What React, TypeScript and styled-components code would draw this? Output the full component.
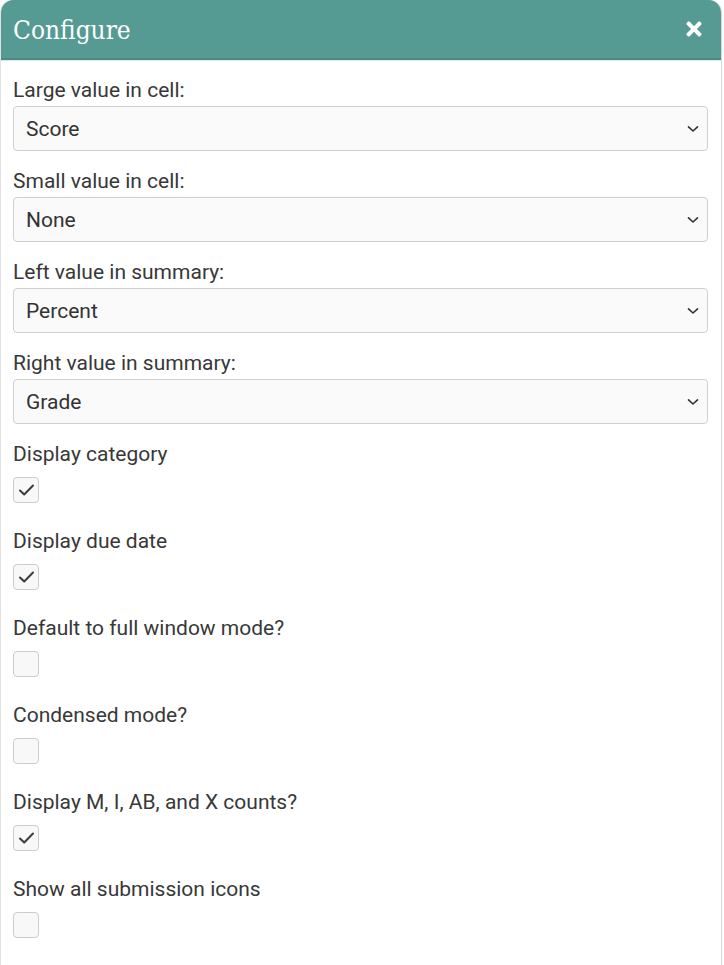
import { VFC } from 'react';
import styled, { createGlobalStyle } from 'styled-components';
import { FaTimes } from 'react-icons/fa';

const GlobalStyle = createGlobalStyle`
  html, body {
    margin: 0;
    padding: 0;
    background: #ffffff;
  }
  body {
    font-family: Roboto, 'Noto Sans', sans-serif;
    color: #333333;
  }
`;

const selects = [
  { label: 'Large value in cell:', value: 'Score' },
  { label: 'Small value in cell:', value: 'None' },
  { label: 'Left value in summary:', value: 'Percent' },
  { label: 'Right value in summary:', value: 'Grade' },
];

const toggles = [
  { label: 'Display category', checked: true },
  { label: 'Display due date', checked: true },
  { label: 'Default to full window mode?', checked: false },
  { label: 'Condensed mode?', checked: false },
  { label: 'Display M, I, AB, and X counts?', checked: true },
  { label: 'Show all submission icons', checked: false },
  { label: 'Enable keyboard navigation', checked: false },
];

const Chevron: VFC = () => (
  <svg width="12" height="8" viewBox="0 0 12 8" fill="none">
    <path
      d="M1.5 1.8 L6 6 L10.5 1.8"
      stroke="#333"
      strokeWidth="1.6"
      strokeLinecap="round"
      strokeLinejoin="round"
    />
  </svg>
);

const Check: VFC = () => (
  <svg width="17" height="14" viewBox="0 0 17 14" fill="none">
    <path
      d="M2 7.5 L6.2 11.5 L15 2.5"
      stroke="#3c3c3c"
      strokeWidth="2"
      strokeLinecap="round"
      strokeLinejoin="round"
    />
  </svg>
);

const App: VFC = () => (
  <>
    <GlobalStyle />
    <Panel>
      <Header>
        <Title>Configure</Title>
        <Close aria-label="Close">
          <FaTimes />
        </Close>
      </Header>
      <Body>
        {selects.map((s) => (
          <Field key={s.label}>
            <Label>{s.label}</Label>
            <SelectBox>
              <span>{s.value}</span>
              <Chevron />
            </SelectBox>
          </Field>
        ))}
        {toggles.map((t) => (
          <Field key={t.label} $check>
            <Label>{t.label}</Label>
            <Checkbox $checked={t.checked}>{t.checked && <Check />}</Checkbox>
          </Field>
        ))}
      </Body>
    </Panel>
  </>
);

export default App;

const Panel = styled.div`
  width: 722px;
  height: 965px;
  overflow: hidden;
  box-sizing: border-box;
  border-left: 1px solid #e2e2e2;
  border-right: 1px solid #d6d6d6;
  border-radius: 13px 13px 0 0;
  background: #ffffff;
`;

const Header = styled.div`
  height: 58px;
  background: #559a93;
  border-bottom: 2px solid #4b8b84;
  display: flex;
  align-items: center;
  justify-content: space-between;
  padding: 0 16px 0 12px;
  box-shadow: 0 1px 0 #d4ecea;
`;

const Title = styled.h1`
  margin: 0;
  font-family: 'DejaVu Serif Condensed', 'DejaVu Serif', serif;
  font-weight: normal;
  font-size: 26px;
  color: #ffffff;
  letter-spacing: 0;
  padding-top: 1px;
`;

const Close = styled.div`
  color: #ffffff;
  font-size: 22px;
  display: flex;
  align-items: center;
  margin-top: -1px;
`;

const Body = styled.div`
  padding: 16px 13px 0 12px;
`;

const Field = styled.div<{ $check?: boolean }>`
  display: flex;
  flex-direction: column;
  align-items: flex-start;
  margin-bottom: ${({ $check }) => ($check ? '24px' : '16px')};
`;

const Label = styled.div`
  font-size: 21px;
  line-height: 28px;
  color: #383838;
  margin-bottom: 2px;
`;

const SelectBox = styled.div`
  box-sizing: border-box;
  width: 100%;
  height: 45px;
  display: flex;
  align-items: center;
  justify-content: space-between;
  padding: 0 8px 0 12px;
  background: #fafafa;
  border: 1px solid #cfcfcf;
  border-radius: 4px;
  font-size: 21px;
  color: #333333;
`;

const Checkbox = styled.div<{ $checked: boolean }>`
  box-sizing: border-box;
  width: 26px;
  height: 26px;
  margin-top: 7px;
  display: flex;
  align-items: center;
  justify-content: center;
  background: #f8f8f8;
  border: 1.5px solid #cccccc;
  border-radius: 4px;
`;
